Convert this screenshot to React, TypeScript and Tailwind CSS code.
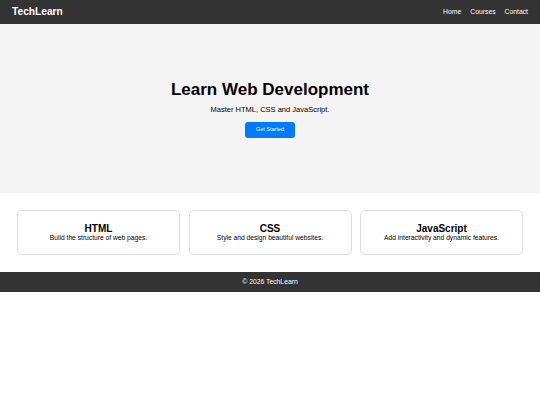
const COURSES = [
  { title: "HTML", body: "Build the structure of web pages." },
  { title: "CSS", body: "Style and design beautiful websites." },
  { title: "JavaScript", body: "Add interactivity and dynamic features." },
];

export default function App() {
  return (
    <div className="min-h-[405px] bg-white font-['Liberation_Sans',Arial,sans-serif] text-black">
      <header className="flex h-[24px] items-center justify-between bg-[#333333] px-[12px] text-white">
        <span className="text-[10.2px] font-bold leading-none">TechLearn</span>
        <nav className="flex items-center gap-[9px] text-[6.8px] leading-none">
          <a href="#" className="text-white">Home</a>
          <a href="#" className="text-white">Courses</a>
          <a href="#" className="text-white">Contact</a>
        </nav>
      </header>

      <section className="flex h-[169px] flex-col items-center justify-center bg-[#f4f4f4] pt-[1.5px]">
        <h1 className="text-[17px] font-bold leading-none">Learn Web Development</h1>
        <p className="mt-[8.5px] text-[7.5px] leading-none">Master HTML, CSS and JavaScript.</p>
        <button className="mt-[8.5px] h-[16px] w-[50px] rounded-[3px] bg-[#007bff] text-[5.5px] leading-none text-white">
          Get Started
        </button>
      </section>

      <section className="grid grid-cols-3 gap-[8.5px] px-[17px] py-[17px]">
        {COURSES.map((c) => (
          <div
            key={c.title}
            className="flex h-[45px] flex-col items-center justify-center rounded-[5px] border border-[#dddddd] bg-white pt-[1px]"
          >
            <h3 className="text-[10px] font-bold leading-none">{c.title}</h3>
            <p className="mt-[1.5px] text-[6.7px] leading-none">{c.body}</p>
          </div>
        ))}
      </section>

      <footer className="flex h-[20px] items-center justify-center bg-[#333333] text-[6.8px] leading-none text-white">
        © 2026 TechLearn
      </footer>
    </div>
  );
}
